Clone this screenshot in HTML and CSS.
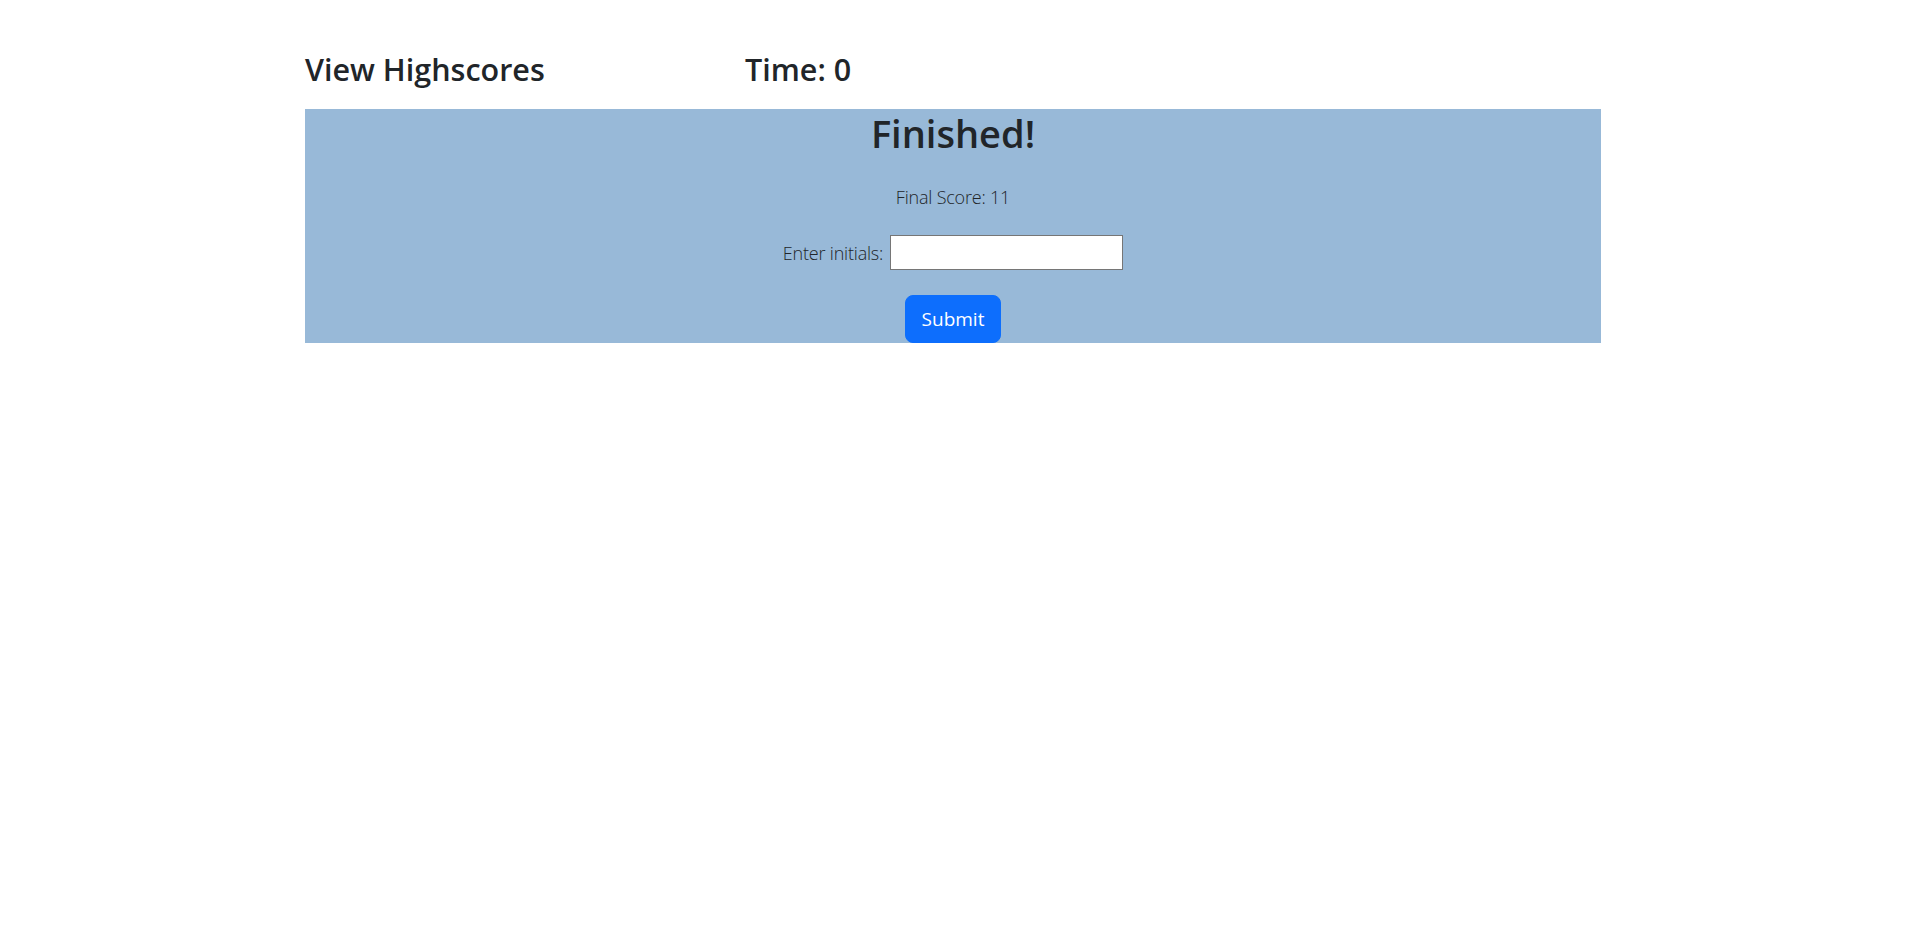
FILE: index.html
```html
<!DOCTYPE html>
<html lang="en">
<head>
<meta charset="utf-8">
<title>Code Quiz</title>
<link rel="stylesheet" href="styles.css">
</head>
<body>
<div class="page">
  <header class="topbar">
    <h2 class="topbar-link">View Highscores</h2>
    <h2 class="topbar-time">Time: 0</h2>
  </header>
  <main class="card">
    <h1 class="card-title">Finished!</h1>
    <p class="lead">Final Score: 11</p>
    <div class="initials-row">
      <label class="lead initials-label" for="initials">Enter initials:</label>
      <input class="initials-input" id="initials" type="text">
    </div>
    <button class="btn-submit" type="button">Submit</button>
  </main>
</div>
</body>
</html>
```

FILE: styles.css
```css
html, body {
  margin: 0;
  padding: 0;
  background: #ffffff;
}
body {
  font-family: "Open Sans", "Noto Sans", sans-serif;
  color: #212529;
  padding-right: 5px;
}
.page {
  max-width: 1296px;
  margin: 0 auto;
}
.topbar {
  display: grid;
  grid-template-columns: 440px 1fr;
  padding-top: 50px;
  margin-bottom: 21px;
}
.topbar h2 {
  margin: 0;
  font-size: 30.5px;
  line-height: 38px;
  font-weight: 600;
}
.card {
  background: #98b9d8;
  text-align: center;
  display: flex;
  flex-direction: column;
  align-items: center;
}
.card-title {
  margin: 0 0 8px;
  font-size: 38px;
  line-height: 48px;
  font-weight: 600;
}
.lead {
  font-size: 18px;
  line-height: 30px;
  font-weight: 300;
  letter-spacing: -0.2px;
}
p.lead {
  margin: 17px 0 0;
}
.initials-row {
  margin-top: 23px;
  display: flex;
  align-items: center;
  gap: 7px;
  height: 35px;
}
.initials-input {
  width: 233px;
  height: 35px;
  padding: 0 2px;
  margin: 0;
  border: 1px solid #767676;
  background: #fff;
  font-size: 16px;
  box-sizing: border-box;
}
.btn-submit {
  margin-top: 25px;
  width: 96px;
  height: 48px;
  border: 1px solid #0d6efd;
  border-radius: 8px;
  background: #0d6efd;
  color: #fff;
  font-family: inherit;
  font-size: 19px;
  font-weight: 400;
  padding: 0;
}
```
